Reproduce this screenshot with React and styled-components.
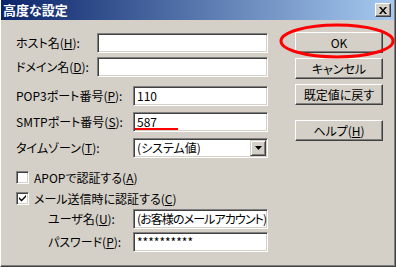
import { createGlobalStyle } from 'styled-components'
import styled from 'styled-components'

const GlobalStyle = createGlobalStyle`
  html, body {
    margin: 0;
    padding: 0;
    background: #d4d0c8;
  }
  body {
    font: 12px "Noto Sans CJK JP", "Noto Sans", sans-serif;
    font-feature-settings: "palt";
    color: #000;
  }
`

const Window = styled.div`
  width: 396px;
  height: 267px;
  box-sizing: border-box;
  background: #d4d0c8;
  border-left: 1px solid #ffffff;
  border-right: 1px solid #404040;
  border-bottom: 1px solid #404040;
  box-shadow: inset -1px -1px 0 #808080;
  display: flex;
  flex-direction: column;
  overflow: hidden;
`

const TitleBar = styled.div`
  height: 20px;
  margin: 0 1px 0 0;
  background: linear-gradient(to right, #0a246a, #a6caf0);
  display: flex;
  align-items: center;
  justify-content: space-between;
  padding: 0 3px 0 2px;
`

const Title = styled.div`
  color: #fff;
  font-weight: bold;
  font-size: 13px;
  line-height: 20px;
`

const CloseButton = styled.div`
  width: 16px;
  height: 14px;
  box-sizing: border-box;
  background: #d4d0c8;
  border-top: 1px solid #fff;
  border-left: 1px solid #fff;
  border-right: 1px solid #404040;
  border-bottom: 1px solid #404040;
  box-shadow: inset -1px -1px 0 #808080;
  display: flex;
  align-items: center;
  justify-content: center;
`

const Body = styled.div`
  display: flex;
  padding: 0 0 0 15px;
`

const Form = styled.div`
  width: 252px;
  display: flex;
  flex-direction: column;
`

const Row = styled.div`
  display: flex;
  align-items: center;
  margin-top: ${p => p.$gap}px;
  padding-left: ${p => p.$indent || 0}px;
`

const Label = styled.label`
  width: ${p => p.$width}px;
  flex: none;
  white-space: nowrap;
  line-height: 14px;
`

const Sunken = styled.div`
  position: relative;
  box-sizing: border-box;
  height: 20px;
  width: 135px;
  flex: ${p => (p.$grow ? '1' : 'none')};
  background: #fff;
  border-top: 1px solid #808080;
  border-left: 1px solid #808080;
  border-right: 1px solid #fff;
  border-bottom: 1px solid #fff;
  box-shadow: inset 1px 1px 0 #404040, inset -1px -1px 0 #d4d0c8;
  display: flex;
  align-items: center;
  padding-left: 3px;
  white-space: nowrap;
  overflow: hidden;
  line-height: 14px;
  letter-spacing: ${p => p.$tight ? '-0.9px' : '0'};
`

const Mark = styled.div`
  position: absolute;
  left: 1px;
  bottom: 1px;
  width: 43px;
  height: 2px;
  background: #ff0000;
`

const DropButton = styled.div`
  position: absolute;
  right: 1px;
  top: 1px;
  width: 16px;
  height: 16px;
  box-sizing: border-box;
  background: #d4d0c8;
  border-top: 1px solid #d4d0c8;
  border-left: 1px solid #d4d0c8;
  border-right: 1px solid #404040;
  border-bottom: 1px solid #404040;
  box-shadow: inset 1px 1px 0 #fff, inset -1px -1px 0 #808080;
  display: flex;
  align-items: center;
  justify-content: center;
`

const CheckRow = styled.label`
  display: flex;
  align-items: center;
  height: 14px;
  margin-top: ${p => p.$gap}px;
  gap: 5px;
  white-space: nowrap;
`

const CheckBox = styled.span`
  width: 13px;
  height: 13px;
  box-sizing: border-box;
  background: #fff;
  border-top: 1px solid #808080;
  border-left: 1px solid #808080;
  border-right: 1px solid #fff;
  border-bottom: 1px solid #fff;
  box-shadow: inset 1px 1px 0 #404040, inset -1px -1px 0 #d4d0c8;
  display: flex;
  align-items: center;
  justify-content: center;
  flex: none;
`

const Buttons = styled.div`
  margin-left: 27px;
  display: flex;
  flex-direction: column;
  position: relative;
`

const Button = styled.div`
  width: 88px;
  height: 21px;
  margin-top: ${p => p.$gap}px;
  box-sizing: border-box;
  background: #d4d0c8;
  border-top: 1px solid #fff;
  border-left: 1px solid #fff;
  border-right: 1px solid #404040;
  border-bottom: 1px solid #404040;
  box-shadow: inset -1px -1px 0 #808080;
  display: flex;
  align-items: center;
  justify-content: center;
  white-space: nowrap;
  line-height: 14px;
`

const Ellipse = styled.svg`
  position: absolute;
  left: -16px;
  top: 3px;
  pointer-events: none;
`

const Key = styled.u`
  text-underline-offset: 1px;
`

export default function App() {
  return (
    <>
      <GlobalStyle />
      <Window>
        <TitleBar>
          <Title>高度な設定</Title>
          <CloseButton>
            <svg width="8" height="7" viewBox="0 0 8 7">
              <path d="M0 0h2l2 2.5L6 0h2L5 3.5 8 7H6L4 4.5 2 7H0l3-3.5z" fill="#000" />
            </svg>
          </CloseButton>
        </TitleBar>
        <Body>
          <Form>
            <Row $gap={13}>
              <Label $width={81}>ホスト名(<Key>H</Key>):</Label>
              <Sunken $grow />
            </Row>
            <Row $gap={4}>
              <Label $width={81}>ドメイン名(<Key>D</Key>):</Label>
              <Sunken $grow />
            </Row>
            <Row $gap={9}>
              <Label $width={117}>POP3ポート番号(<Key>P</Key>):</Label>
              <Sunken>110</Sunken>
            </Row>
            <Row $gap={6}>
              <Label $width={117}>SMTPポート番号(<Key>S</Key>):</Label>
              <Sunken>
                587
                <Mark />
              </Sunken>
            </Row>
            <Row $gap={6}>
              <Label $width={117}>タイムゾーン(<Key>T</Key>):</Label>
              <Sunken>
                (システム値)
                <DropButton>
                  <svg width="7" height="4" viewBox="0 0 7 4">
                    <path d="M0 0h7L3.5 4z" fill="#000" />
                  </svg>
                </DropButton>
              </Sunken>
            </Row>
            <CheckRow $gap={12}>
              <CheckBox />
              <span>APOPで認証する(<Key>A</Key>)</span>
            </CheckRow>
            <CheckRow $gap={7}>
              <CheckBox>
                <svg width="7" height="7" viewBox="0 0 7 7">
                  <path d="M0 2l2.5 2.5L7 0v2L2.5 6.5 0 4z" fill="#000" />
                </svg>
              </CheckBox>
              <span>メール送信時に認証する(<Key>C</Key>)</span>
            </CheckRow>
            <Row $gap={4} $indent={32}>
              <Label $width={85}>ユーザ名(<Key>U</Key>):</Label>
              <Sunken $tight>(お客様のメールアカウント)</Sunken>
            </Row>
            <Row $gap={3} $indent={32}>
              <Label $width={85}>パスワード(<Key>P</Key>):</Label>
              <Sunken>**********</Sunken>
            </Row>
          </Form>
          <Buttons>
            <Button $gap={12}>OK</Button>
            <Button $gap={5}>キャンセル</Button>
            <Button $gap={5}>既定値に戻す</Button>
            <Button $gap={15}>ヘルプ(<Key>H</Key>)</Button>
            <Ellipse width="118" height="36" viewBox="0 0 118 36">
              <ellipse cx="58" cy="18" rx="56" ry="16" fill="none" stroke="#ff0000" strokeWidth="3" />
            </Ellipse>
          </Buttons>
        </Body>
      </Window>
    </>
  )
}
